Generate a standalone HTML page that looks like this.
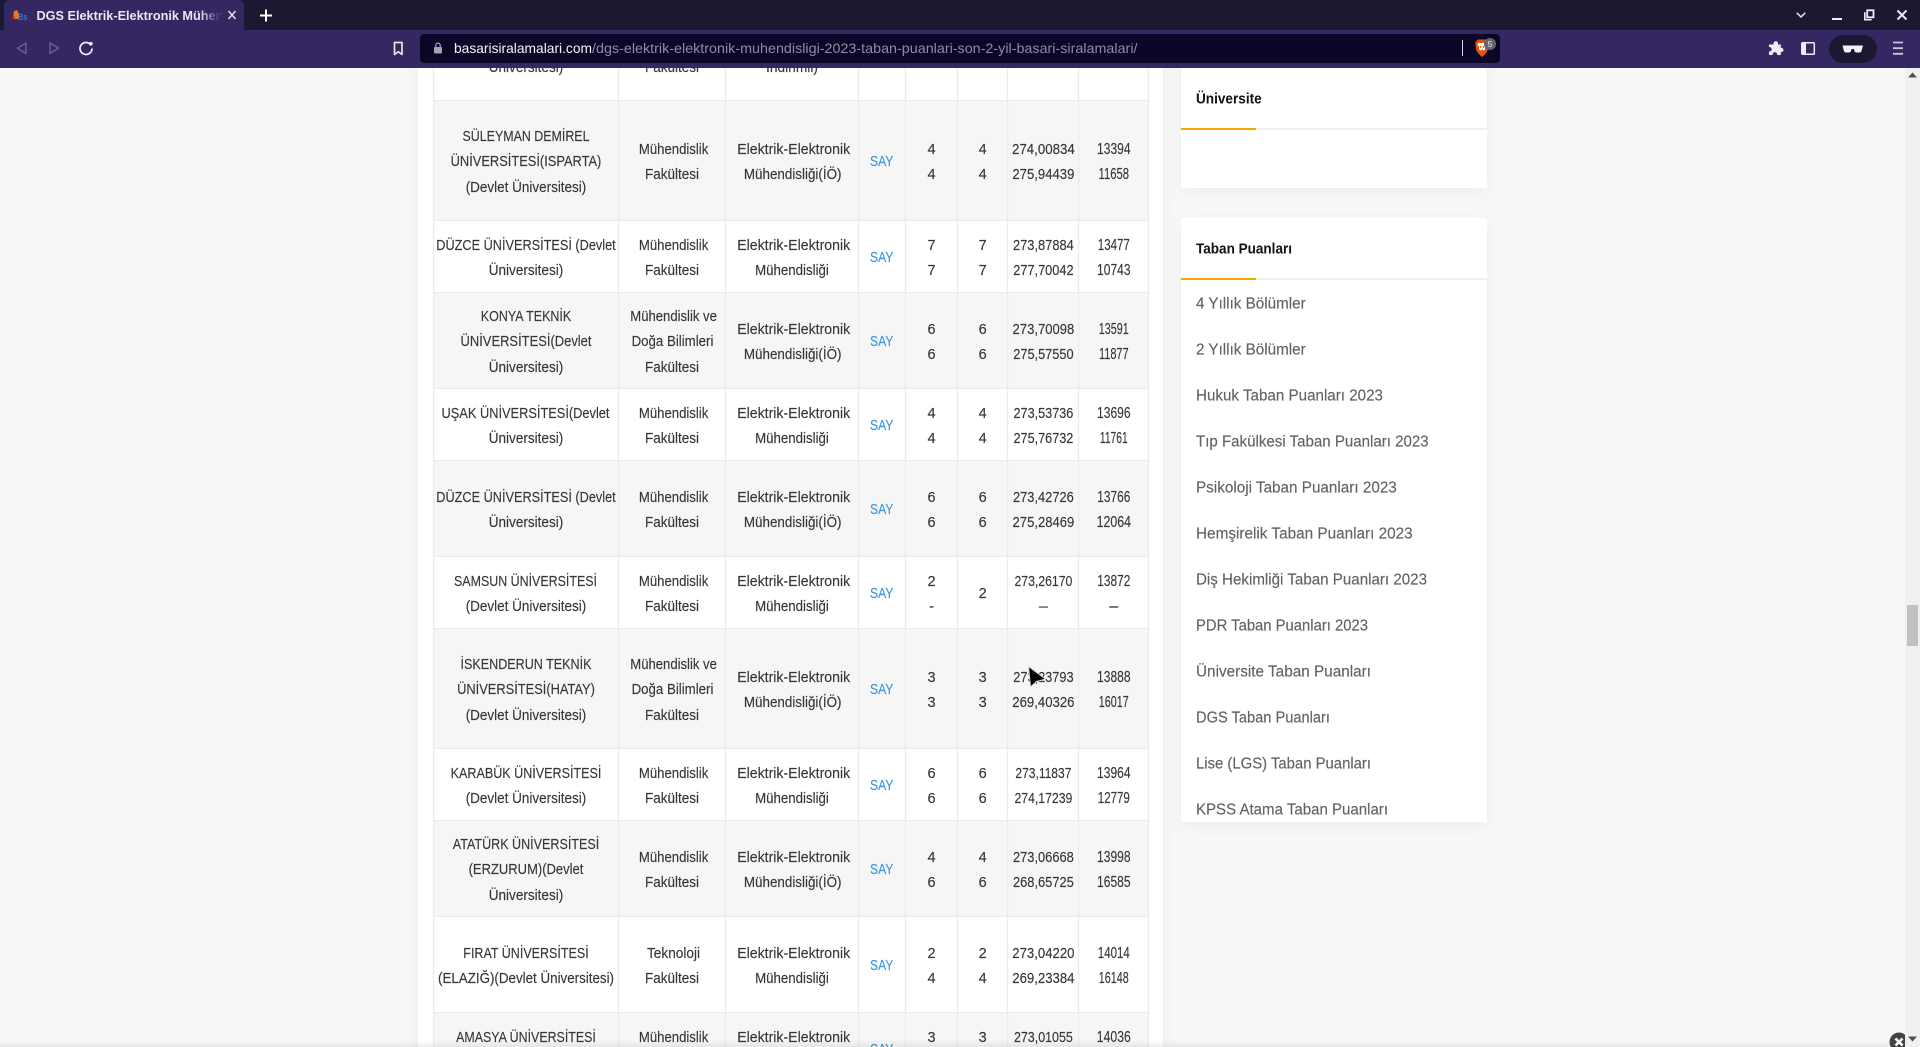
<!DOCTYPE html>
<html lang="tr"><head><meta charset="utf-8"><title>DGS Elektrik-Elektronik</title>
<style>
html,body{margin:0;padding:0;width:1920px;height:1047px;overflow:hidden;background:#f8f8f8}
.c{position:absolute;background:#fff;box-shadow:0 4px 18px rgba(0,0,0,.05)}
svg{position:absolute;left:0;top:0}
text{font-family:"Liberation Sans",Arial,sans-serif}
.t text{font-size:14.5px;fill:#363636;stroke:#363636;stroke-width:.14;text-anchor:middle}
.t text.s{fill:#3f97d3;stroke:#3f97d3}
.t text[x="1113.8"]{font-size:15.5px}
.l text{font-size:15.5px;fill:#626262;stroke:#626262;stroke-width:.15}
.h text{font-size:15px;font-weight:bold;fill:#111}
</style></head><body>
<div class="c" style="left:418px;top:0;width:745px;height:1047px"></div>
<div class="c" style="left:1181px;top:0;width:306px;height:188px"></div>
<div class="c" style="left:1181px;top:218px;width:306px;height:604px"></div>
<svg width="1920" height="1047" viewBox="0 0 1920 1047" xmlns="http://www.w3.org/2000/svg">
<defs>
<linearGradient id="fade" x1="0" x2="1" y1="0" y2="0"><stop offset="0" stop-color="#352761" stop-opacity="0"/><stop offset="1" stop-color="#352761"/></linearGradient>
<linearGradient id="bot" x1="0" x2="0" y1="0" y2="1"><stop offset="0" stop-color="#000" stop-opacity="0"/><stop offset="1" stop-color="#000" stop-opacity=".07"/></linearGradient>
</defs>
<g fill="#f6f6f6">
<rect x="433" y="100" width="716" height="120"/><rect x="433" y="292" width="716" height="96"/><rect x="433" y="460" width="716" height="96"/><rect x="433" y="628" width="716" height="120"/><rect x="433" y="820" width="716" height="96"/><rect x="433" y="1012" width="716" height="35"/>
</g>
<g stroke="#e9edf0" stroke-width="1.3" fill="none">
<path d="M433.5 60V1047M618.5 60V1047M725.5 60V1047M858.5 60V1047M905.5 60V1047M957.5 60V1047M1007.5 60V1047M1078.5 60V1047M1148.5 60V1047"/>
<path d="M433 100.5H1149M433 220.5H1149M433 292.5H1149M433 388.5H1149M433 460.5H1149M433 556.5H1149M433 628.5H1149M433 748.5H1149M433 820.5H1149M433 916.5H1149M433 1012.5H1149"/>
</g>
<g class="t">
<text x="526" y="72" textLength="74.6" lengthAdjust="spacingAndGlyphs">Üniversitesi)</text>
<text x="672" y="72" textLength="54" lengthAdjust="spacingAndGlyphs">Fakültesi</text>
<text x="792" y="72" textLength="52" lengthAdjust="spacingAndGlyphs">İndirimli)</text>

<text x="526" y="141" textLength="127" lengthAdjust="spacingAndGlyphs">SÜLEYMAN DEMİREL</text>
<text x="526" y="166" textLength="150.7" lengthAdjust="spacingAndGlyphs">ÜNİVERSİTESİ(ISPARTA)</text>
<text x="526" y="192" textLength="120.6" lengthAdjust="spacingAndGlyphs">(Devlet Üniversitesi)</text>
<text x="673.6" y="154" textLength="69.4" lengthAdjust="spacingAndGlyphs">Mühendislik</text>
<text x="672" y="179" textLength="54" lengthAdjust="spacingAndGlyphs">Fakültesi</text>
<text x="793.7" y="154" textLength="113" lengthAdjust="spacingAndGlyphs">Elektrik-Elektronik</text>
<text x="792.7" y="179" textLength="97.6" lengthAdjust="spacingAndGlyphs">Mühendisliği(İÖ)</text>
<text class="s" x="881.7" y="166" textLength="23.4" lengthAdjust="spacingAndGlyphs">SAY</text>
<text x="931.5" y="154">4</text><text x="931.5" y="179">4</text>
<text x="982.7" y="154">4</text><text x="982.7" y="179">4</text>
<text x="1043.4" y="154" textLength="62.7" lengthAdjust="spacingAndGlyphs">274,00834</text>
<text x="1043.4" y="179" textLength="62" lengthAdjust="spacingAndGlyphs">275,94439</text>
<text x="1113.8" y="154" textLength="33.5" lengthAdjust="spacingAndGlyphs">13394</text>
<text x="1113.8" y="179" textLength="30.6" lengthAdjust="spacingAndGlyphs">11658</text>

<text x="526" y="250" textLength="179.4" lengthAdjust="spacingAndGlyphs">DÜZCE ÜNİVERSİTESİ  (Devlet</text>
<text x="526" y="275" textLength="74.6" lengthAdjust="spacingAndGlyphs">Üniversitesi)</text>
<text x="673.6" y="250" textLength="69.4" lengthAdjust="spacingAndGlyphs">Mühendislik</text>
<text x="672" y="275" textLength="54" lengthAdjust="spacingAndGlyphs">Fakültesi</text>
<text x="793.7" y="250" textLength="113" lengthAdjust="spacingAndGlyphs">Elektrik-Elektronik</text>
<text x="792" y="275" textLength="73.7" lengthAdjust="spacingAndGlyphs">Mühendisliği</text>
<text class="s" x="881.7" y="262" textLength="23.4" lengthAdjust="spacingAndGlyphs">SAY</text>
<text x="931.5" y="250">7</text><text x="931.5" y="275">7</text>
<text x="982.7" y="250">7</text><text x="982.7" y="275">7</text>
<text x="1043.4" y="250" textLength="60.8" lengthAdjust="spacingAndGlyphs">273,87884</text>
<text x="1043.4" y="275" textLength="60.3" lengthAdjust="spacingAndGlyphs">277,70042</text>
<text x="1113.8" y="250" textLength="32" lengthAdjust="spacingAndGlyphs">13477</text>
<text x="1113.8" y="275" textLength="33.5" lengthAdjust="spacingAndGlyphs">10743</text>

<text x="526" y="321" textLength="90.4" lengthAdjust="spacingAndGlyphs">KONYA TEKNİK</text>
<text x="526" y="346" textLength="131" lengthAdjust="spacingAndGlyphs">ÜNİVERSİTESİ(Devlet</text>
<text x="526" y="372" textLength="74.6" lengthAdjust="spacingAndGlyphs">Üniversitesi)</text>
<text x="673.6" y="321" textLength="86.6" lengthAdjust="spacingAndGlyphs">Mühendislik ve</text>
<text x="672.5" y="346" textLength="81.8" lengthAdjust="spacingAndGlyphs">Doğa Bilimleri</text>
<text x="672" y="372" textLength="54" lengthAdjust="spacingAndGlyphs">Fakültesi</text>
<text x="793.7" y="334" textLength="113" lengthAdjust="spacingAndGlyphs">Elektrik-Elektronik</text>
<text x="792.7" y="359" textLength="97.6" lengthAdjust="spacingAndGlyphs">Mühendisliği(İÖ)</text>
<text class="s" x="881.7" y="346" textLength="23.4" lengthAdjust="spacingAndGlyphs">SAY</text>
<text x="931.5" y="334">6</text><text x="931.5" y="359">6</text>
<text x="982.7" y="334">6</text><text x="982.7" y="359">6</text>
<text x="1043.4" y="334" textLength="61.7" lengthAdjust="spacingAndGlyphs">273,70098</text>
<text x="1043.4" y="359" textLength="60.3" lengthAdjust="spacingAndGlyphs">275,57550</text>
<text x="1113.8" y="334" textLength="30" lengthAdjust="spacingAndGlyphs">13591</text>
<text x="1113.8" y="359" textLength="29.7" lengthAdjust="spacingAndGlyphs">11877</text>

<text x="525.5" y="418" textLength="168" lengthAdjust="spacingAndGlyphs">UŞAK ÜNİVERSİTESİ(Devlet</text>
<text x="526" y="443" textLength="74.6" lengthAdjust="spacingAndGlyphs">Üniversitesi)</text>
<text x="673.6" y="418" textLength="69.4" lengthAdjust="spacingAndGlyphs">Mühendislik</text>
<text x="672" y="443" textLength="54" lengthAdjust="spacingAndGlyphs">Fakültesi</text>
<text x="793.7" y="418" textLength="113" lengthAdjust="spacingAndGlyphs">Elektrik-Elektronik</text>
<text x="792" y="443" textLength="73.7" lengthAdjust="spacingAndGlyphs">Mühendisliği</text>
<text class="s" x="881.7" y="430" textLength="23.4" lengthAdjust="spacingAndGlyphs">SAY</text>
<text x="931.5" y="418">4</text><text x="931.5" y="443">4</text>
<text x="982.7" y="418">4</text><text x="982.7" y="443">4</text>
<text x="1043.4" y="418" textLength="59.8" lengthAdjust="spacingAndGlyphs">273,53736</text>
<text x="1043.4" y="443" textLength="59.8" lengthAdjust="spacingAndGlyphs">275,76732</text>
<text x="1113.8" y="418" textLength="33.5" lengthAdjust="spacingAndGlyphs">13696</text>
<text x="1113.8" y="443" textLength="27.8" lengthAdjust="spacingAndGlyphs">11761</text>

<text x="526" y="502" textLength="179.4" lengthAdjust="spacingAndGlyphs">DÜZCE ÜNİVERSİTESİ  (Devlet</text>
<text x="526" y="527" textLength="74.6" lengthAdjust="spacingAndGlyphs">Üniversitesi)</text>
<text x="673.6" y="502" textLength="69.4" lengthAdjust="spacingAndGlyphs">Mühendislik</text>
<text x="672" y="527" textLength="54" lengthAdjust="spacingAndGlyphs">Fakültesi</text>
<text x="793.7" y="502" textLength="113" lengthAdjust="spacingAndGlyphs">Elektrik-Elektronik</text>
<text x="792.7" y="527" textLength="97.6" lengthAdjust="spacingAndGlyphs">Mühendisliği(İÖ)</text>
<text class="s" x="881.7" y="514" textLength="23.4" lengthAdjust="spacingAndGlyphs">SAY</text>
<text x="931.5" y="502">6</text><text x="931.5" y="527">6</text>
<text x="982.7" y="502">6</text><text x="982.7" y="527">6</text>
<text x="1043.4" y="502" textLength="60.8" lengthAdjust="spacingAndGlyphs">273,42726</text>
<text x="1043.4" y="527" textLength="61.7" lengthAdjust="spacingAndGlyphs">275,28469</text>
<text x="1113.8" y="502" textLength="33" lengthAdjust="spacingAndGlyphs">13766</text>
<text x="1113.8" y="527" textLength="34.4" lengthAdjust="spacingAndGlyphs">12064</text>

<text x="525.5" y="586" textLength="143" lengthAdjust="spacingAndGlyphs">SAMSUN ÜNİVERSİTESİ</text>
<text x="526" y="611" textLength="120.6" lengthAdjust="spacingAndGlyphs">(Devlet Üniversitesi)</text>
<text x="673.6" y="586" textLength="69.4" lengthAdjust="spacingAndGlyphs">Mühendislik</text>
<text x="672" y="611" textLength="54" lengthAdjust="spacingAndGlyphs">Fakültesi</text>
<text x="793.7" y="586" textLength="113" lengthAdjust="spacingAndGlyphs">Elektrik-Elektronik</text>
<text x="792" y="611" textLength="73.7" lengthAdjust="spacingAndGlyphs">Mühendisliği</text>
<text class="s" x="881.7" y="598" textLength="23.4" lengthAdjust="spacingAndGlyphs">SAY</text>
<text x="931.5" y="586">2</text><text x="931.5" y="611">-</text>
<text x="982.7" y="598">2</text>
<text x="1043.4" y="586" textLength="57.9" lengthAdjust="spacingAndGlyphs">273,26170</text>
<text x="1043.4" y="611" textLength="9" lengthAdjust="spacingAndGlyphs">—</text>
<text x="1113.8" y="586" textLength="33" lengthAdjust="spacingAndGlyphs">13872</text>
<text x="1113.8" y="611" textLength="9" lengthAdjust="spacingAndGlyphs">—</text>

<text x="526" y="669" textLength="131" lengthAdjust="spacingAndGlyphs">İSKENDERUN TEKNİK</text>
<text x="526" y="694" textLength="137.8" lengthAdjust="spacingAndGlyphs">ÜNİVERSİTESİ(HATAY)</text>
<text x="526" y="720" textLength="120.6" lengthAdjust="spacingAndGlyphs">(Devlet Üniversitesi)</text>
<text x="673.6" y="669" textLength="86.6" lengthAdjust="spacingAndGlyphs">Mühendislik ve</text>
<text x="672.5" y="694" textLength="81.8" lengthAdjust="spacingAndGlyphs">Doğa Bilimleri</text>
<text x="672" y="720" textLength="54" lengthAdjust="spacingAndGlyphs">Fakültesi</text>
<text x="793.7" y="682" textLength="113" lengthAdjust="spacingAndGlyphs">Elektrik-Elektronik</text>
<text x="792.7" y="707" textLength="97.6" lengthAdjust="spacingAndGlyphs">Mühendisliği(İÖ)</text>
<text class="s" x="881.7" y="694" textLength="23.4" lengthAdjust="spacingAndGlyphs">SAY</text>
<text x="931.5" y="682">3</text><text x="931.5" y="707">3</text>
<text x="982.7" y="682">3</text><text x="982.7" y="707">3</text>
<text x="1043.4" y="682" textLength="60.3" lengthAdjust="spacingAndGlyphs">273,23793</text>
<text x="1043.4" y="707" textLength="62.2" lengthAdjust="spacingAndGlyphs">269,40326</text>
<text x="1113.8" y="682" textLength="33.5" lengthAdjust="spacingAndGlyphs">13888</text>
<text x="1113.8" y="707" textLength="30" lengthAdjust="spacingAndGlyphs">16017</text>

<text x="526" y="778" textLength="150.7" lengthAdjust="spacingAndGlyphs">KARABÜK ÜNİVERSİTESİ</text>
<text x="526" y="803" textLength="120.6" lengthAdjust="spacingAndGlyphs">(Devlet Üniversitesi)</text>
<text x="673.6" y="778" textLength="69.4" lengthAdjust="spacingAndGlyphs">Mühendislik</text>
<text x="672" y="803" textLength="54" lengthAdjust="spacingAndGlyphs">Fakültesi</text>
<text x="793.7" y="778" textLength="113" lengthAdjust="spacingAndGlyphs">Elektrik-Elektronik</text>
<text x="792" y="803" textLength="73.7" lengthAdjust="spacingAndGlyphs">Mühendisliği</text>
<text class="s" x="881.7" y="790" textLength="23.4" lengthAdjust="spacingAndGlyphs">SAY</text>
<text x="931.5" y="778">6</text><text x="931.5" y="803">6</text>
<text x="982.7" y="778">6</text><text x="982.7" y="803">6</text>
<text x="1043.4" y="778" textLength="56" lengthAdjust="spacingAndGlyphs">273,11837</text>
<text x="1043.4" y="803" textLength="57.9" lengthAdjust="spacingAndGlyphs">274,17239</text>
<text x="1113.8" y="778" textLength="33.5" lengthAdjust="spacingAndGlyphs">13964</text>
<text x="1113.8" y="803" textLength="32" lengthAdjust="spacingAndGlyphs">12779</text>

<text x="526" y="849" textLength="146.4" lengthAdjust="spacingAndGlyphs">ATATÜRK ÜNİVERSİTESİ</text>
<text x="526" y="874" textLength="114.8" lengthAdjust="spacingAndGlyphs">(ERZURUM)(Devlet</text>
<text x="526" y="900" textLength="74.6" lengthAdjust="spacingAndGlyphs">Üniversitesi)</text>
<text x="673.6" y="862" textLength="69.4" lengthAdjust="spacingAndGlyphs">Mühendislik</text>
<text x="672" y="887" textLength="54" lengthAdjust="spacingAndGlyphs">Fakültesi</text>
<text x="793.7" y="862" textLength="113" lengthAdjust="spacingAndGlyphs">Elektrik-Elektronik</text>
<text x="792.7" y="887" textLength="97.6" lengthAdjust="spacingAndGlyphs">Mühendisliği(İÖ)</text>
<text class="s" x="881.7" y="874" textLength="23.4" lengthAdjust="spacingAndGlyphs">SAY</text>
<text x="931.5" y="862">4</text><text x="931.5" y="887">6</text>
<text x="982.7" y="862">4</text><text x="982.7" y="887">6</text>
<text x="1043.4" y="862" textLength="60.8" lengthAdjust="spacingAndGlyphs">273,06668</text>
<text x="1043.4" y="887" textLength="60.8" lengthAdjust="spacingAndGlyphs">268,65725</text>
<text x="1113.8" y="862" textLength="33.5" lengthAdjust="spacingAndGlyphs">13998</text>
<text x="1113.8" y="887" textLength="33.5" lengthAdjust="spacingAndGlyphs">16585</text>

<text x="526" y="958" textLength="125.4" lengthAdjust="spacingAndGlyphs">FIRAT ÜNİVERSİTESİ</text>
<text x="526" y="983" textLength="176" lengthAdjust="spacingAndGlyphs">(ELAZIĞ)(Devlet Üniversitesi)</text>
<text x="673.5" y="958" textLength="53" lengthAdjust="spacingAndGlyphs">Teknoloji</text>
<text x="672" y="983" textLength="54" lengthAdjust="spacingAndGlyphs">Fakültesi</text>
<text x="793.7" y="958" textLength="113" lengthAdjust="spacingAndGlyphs">Elektrik-Elektronik</text>
<text x="792" y="983" textLength="73.7" lengthAdjust="spacingAndGlyphs">Mühendisliği</text>
<text class="s" x="881.7" y="970" textLength="23.4" lengthAdjust="spacingAndGlyphs">SAY</text>
<text x="931.5" y="958">2</text><text x="931.5" y="983">4</text>
<text x="982.7" y="958">2</text><text x="982.7" y="983">4</text>
<text x="1043.4" y="958" textLength="62.2" lengthAdjust="spacingAndGlyphs">273,04220</text>
<text x="1043.4" y="983" textLength="62.2" lengthAdjust="spacingAndGlyphs">269,23384</text>
<text x="1113.8" y="958" textLength="32" lengthAdjust="spacingAndGlyphs">14014</text>
<text x="1113.8" y="983" textLength="30" lengthAdjust="spacingAndGlyphs">16148</text>

<text x="526" y="1042" textLength="139.7" lengthAdjust="spacingAndGlyphs">AMASYA ÜNİVERSİTESİ</text>
<text x="673.6" y="1042" textLength="69.4" lengthAdjust="spacingAndGlyphs">Mühendislik</text>
<text x="793.7" y="1042" textLength="113" lengthAdjust="spacingAndGlyphs">Elektrik-Elektronik</text>
<text class="s" x="881.7" y="1054" textLength="23.4" lengthAdjust="spacingAndGlyphs">SAY</text>
<text x="931.5" y="1042">3</text>
<text x="982.7" y="1042">3</text>
<text x="1043.4" y="1042" textLength="58.9" lengthAdjust="spacingAndGlyphs">273,01055</text>
<text x="1113.8" y="1042" textLength="34" lengthAdjust="spacingAndGlyphs">14036</text>
</g>

<!-- sidebar -->
<g class="h">
<text x="1196" y="103.500" textLength="65.7" lengthAdjust="spacingAndGlyphs">Üniversite</text>
<text x="1196" y="253.500" textLength="96" lengthAdjust="spacingAndGlyphs">Taban Puanları</text>
</g>
<rect x="1181" y="128" width="306" height="2" fill="#f1f1f1"/><rect x="1181" y="128" width="75" height="2" fill="#f5a800"/>
<rect x="1181" y="278" width="306" height="2" fill="#f1f1f1"/><rect x="1181" y="278" width="75" height="2" fill="#f5a800"/>
<g class="l">
<text x="1196" y="308.500" textLength="109.7" lengthAdjust="spacingAndGlyphs">4 Yıllık Bölümler</text>
<text x="1196" y="354.500" textLength="109.7" lengthAdjust="spacingAndGlyphs">2 Yıllık Bölümler</text>
<text x="1196" y="400.500" textLength="187" lengthAdjust="spacingAndGlyphs">Hukuk Taban Puanları 2023</text>
<text x="1196" y="446.500" textLength="232.7" lengthAdjust="spacingAndGlyphs">Tıp Fakülkesi Taban Puanları 2023</text>
<text x="1196" y="492.500" textLength="200.8" lengthAdjust="spacingAndGlyphs">Psikoloji Taban Puanları 2023</text>
<text x="1196" y="538.500" textLength="216.7" lengthAdjust="spacingAndGlyphs">Hemşirelik Taban Puanları 2023</text>
<text x="1196" y="584.500" textLength="231" lengthAdjust="spacingAndGlyphs">Diş Hekimliği Taban Puanları 2023</text>
<text x="1196" y="630.500" textLength="172" lengthAdjust="spacingAndGlyphs">PDR Taban Puanları 2023</text>
<text x="1196" y="676.500" textLength="175" lengthAdjust="spacingAndGlyphs">Üniversite Taban Puanları</text>
<text x="1196" y="722.500" textLength="134" lengthAdjust="spacingAndGlyphs">DGS Taban Puanları</text>
<text x="1196" y="768.500" textLength="175" lengthAdjust="spacingAndGlyphs">Lise (LGS) Taban Puanları</text>
<text x="1196" y="814.500" textLength="192" lengthAdjust="spacingAndGlyphs">KPSS Atama Taban Puanları</text>
</g>

<!-- scrollbar -->
<rect x="1905" y="68" width="15" height="979" fill="#f0f0f0"/>
<rect x="1907" y="605" width="11" height="41" fill="#c1c1c1"/>
<path d="M1912.5 72.5l4.5 5h-9z" fill="#505050"/>
<rect x="0" y="1040" width="1905" height="7" fill="url(#bot)"/>
<!-- floating close -->
<circle cx="1899" cy="1042" r="9.5" fill="#424242"/>
<path d="M1895.5 1038.5l7 7M1902.5 1038.5l-7 7" stroke="#fff" stroke-width="2.6"/>
<rect x="1905" y="1030" width="15" height="17" fill="#f0f0f0"/>
<path d="M1912.5 1041.5l4.5-5h-9z" fill="#505050"/>
<!-- mouse cursor -->
<path d="M1028.500 666.500L1030.500 687L1036.500 681.500L1045.500 679Z" fill="#000" stroke="#dcdcdc" stroke-width="1" stroke-linejoin="round"/>

<!-- browser chrome -->
<rect x="0" y="0" width="1920" height="30" fill="#1b1932"/>
<rect x="0" y="30" width="1920" height="38" fill="#352761"/>
<path d="M4 30V5a5 5 0 0 1 5-5H239a5 5 0 0 1 5 5V30Z" fill="#352761"/>
<!-- favicon -->
<path d="M12 19l2-8 3-1 1.500 3 1 6z" fill="#ea7a17"/><path d="M12 19l1.500-6 1.500 6z" fill="#c8261c"/>
<text x="18" y="20" font-size="9" font-weight="bold" fill="#3b78c8" textLength="9.500" lengthAdjust="spacingAndGlyphs">Bs</text>
<text x="36.500" y="20" font-size="13" font-weight="bold" fill="#e9e8f2" textLength="184" lengthAdjust="spacingAndGlyphs">DGS Elektrik-Elektronik Müher</text>
<rect x="200" y="4" width="20" height="24" fill="url(#fade)"/>
<path d="M228.500 11l7 8M235.500 11l-7 8" stroke="#e9e8f2" stroke-width="1.400" fill="none"/>
<path d="M266 9.500v12M260 15.500h12" stroke="#fff" stroke-width="2" fill="none"/>
<!-- nav -->
<path d="M26 43v10.500L17.500 48.200Z" fill="none" stroke="#6e6488" stroke-width="1.400" stroke-linejoin="round"/>
<path d="M50 43v10.500L58.500 48.200Z" fill="none" stroke="#6e6488" stroke-width="1.400" stroke-linejoin="round"/>
<path d="M90.500 44.500A6 6 0 1 0 92 48.500" fill="none" stroke="#f0eff5" stroke-width="1.700"/>
<circle cx="90.800" cy="43.800" r="1.900" fill="#f0eff5"/>
<path d="M394.500 42.500h7.500v12l-3.750-2.800-3.750 2.800z" fill="none" stroke="#e6e4ee" stroke-width="1.700" stroke-linejoin="round"/>
<!-- url bar -->
<rect x="420" y="34" width="1080" height="29" rx="4" fill="#0b0729"/>
<rect x="434" y="47" width="8" height="6.500" rx="1" fill="#a5a2b4"/>
<path d="M435.800 47v-1.800a2.200 2.200 0 0 1 4.400 0V47" fill="none" stroke="#a5a2b4" stroke-width="1.200"/>
<text x="454" y="53" font-size="14" fill="#f4f3f8" textLength="138" lengthAdjust="spacingAndGlyphs">basarisiralamalari.com</text>
<text x="592" y="53" font-size="14" fill="#8f8ca2" textLength="545.500" lengthAdjust="spacingAndGlyphs">/dgs-elektrik-elektronik-muhendisligi-2023-taban-puanlari-son-2-yil-basari-siralamalari/</text>
<rect x="1462" y="40" width="1" height="16" fill="#d8d6e2"/>
<!-- brave shield -->
<path d="M1478 39.500h8l2.800 3-.8 6.500c-.6 3-2.800 5.300-6 8-3.200-2.700-5.400-5-6-8l-.8-6.500z" fill="#ea4f0e"/>
<path d="M1478.500 43h7l1 2-1.500 1.500v3l-1.500 1h-3l-1.500-1v-3L1477.500 45z" fill="#fff"/>
<path d="M1480 46h1.200v1.800H1480zM1483 46h1.200v1.800H1483zM1481.500 49.500h1.500v3h-1.500z" fill="#ea4f0e"/>
<circle cx="1490" cy="44" r="6" fill="#66656f"/>
<text x="1490" y="47" font-size="8.500" fill="#e8e8ee" text-anchor="middle">5</text>
<!-- puzzle -->
<path d="M1771.500 44.500h2.200a2.300 2.300 0 1 1 4.300-.5v.5h2.800v3.300a2.200 2.200 0 1 1 0 4.300v2.900h-3.800a2.200 2.200 0 1 0-4.200 0H1769v-3.600a2.200 2.200 0 1 0 0-4.300v-2.600z" fill="#eeedf3"/>
<!-- sidebar icon -->
<rect x="1801.800" y="42.800" width="12.500" height="11.500" rx="1" fill="none" stroke="#eeedf3" stroke-width="1.500"/>
<rect x="1802" y="43" width="4" height="11" fill="#eeedf3"/>
<!-- glasses -->
<rect x="1829" y="35" width="48" height="28" rx="14" fill="#1b1932"/>
<path d="M1842.500 45.500h20.500l-1.500 5.500c-.4 1-1 1.500-2 1.500h-3c-1.500 0-2-1-2.500-3.500h-2.500c-.5 2.500-1 3.500-2.500 3.500h-3c-1 0-1.600-.5-2-1.500z" fill="#f2f1f6"/>
<!-- hamburger -->
<path d="M1893 42.500h10M1893 48.200h10M1893 53.800h10" stroke="#c9c5d8" stroke-width="1.800" fill="none"/>
<!-- window controls -->
<path d="M1796.800 12.800l4.200 4.200 4.200-4.200" fill="none" stroke="#e6e5ee" stroke-width="1.500"/>
<rect x="1832" y="18" width="10" height="2" fill="#efeef4"/>
<path d="M1864.800 12.200v7.500h6.800" fill="none" stroke="#efeef4" stroke-width="1.600"/>
<rect x="1867.200" y="10.300" width="6.300" height="7" fill="none" stroke="#efeef4" stroke-width="1.800"/>
<path d="M1897.500 10.500l9 9M1906.500 10.500l-9 9" stroke="#efeef4" stroke-width="2" fill="none"/>
</svg>
</body></html>
